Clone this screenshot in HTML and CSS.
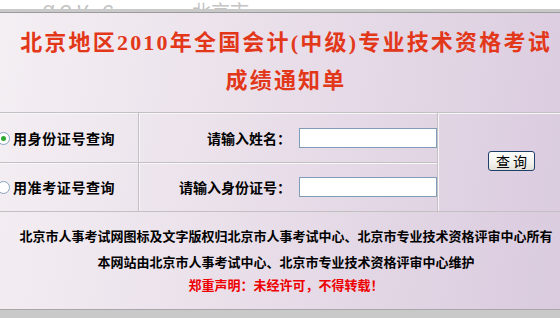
FILE: index.html
```html
<!DOCTYPE html>
<html lang="zh-CN">
<head>
<meta charset="utf-8">
<title>成绩通知单</title>
<link rel="stylesheet" href="styles.css">
</head>
<body>
<div class="page">
  <div class="topstrip">
    <span class="wm wm-latin">gov.c</span>
    <span class="wm wm-cjk">北京市</span>
  </div>
  <div class="topbar"></div>
  <div class="main">
    <div class="wrap">
      <h1 class="title">
        <span class="title-line">北京地区2010年全国会计(中级)专业技术资格考试</span>
        <span class="title-line">成绩通知单</span>
      </h1>
      <table class="query">
        <colgroup>
          <col class="c1">
          <col class="c2">
          <col class="c3">
        </colgroup>
        <tr class="r1">
          <td class="opt"><span class="radio checked"></span>用身份证号查询</td>
          <td class="field"><div class="fieldrow"><span class="lbl">请输入姓名：</span><span class="box"></span></div></td>
          <td class="btncell" rowspan="2"><span class="btn">查 询</span></td>
        </tr>
        <tr class="r2">
          <td class="opt"><span class="radio"></span>用准考证号查询</td>
          <td class="field"><div class="fieldrow"><span class="lbl">请输入身份证号：</span><span class="box"></span></div></td>
        </tr>
      </table>
      <div class="foot">
        <p class="fl l1">北京市人事考试网图标及文字版权归北京市人事考试中心、北京市专业技术资格评审中心所有</p>
        <p class="fl l2">本网站由北京市人事考试中心、北京市专业技术资格评审中心维护</p>
        <p class="fl l3">郑重声明：未经许可，不得转载！</p>
      </div>
    </div>
  </div>
  <div class="bottombar"></div>
</div>
</body>
</html>
```
FILE: styles.css
```css
html, body {
  margin: 0;
  padding: 0;
  overflow: hidden;
  background: #ffffff;
}
body {
  font-family: "Noto Sans CJK SC", sans-serif;
}
.page {
  width: 560px;
  height: 318px;
  overflow: hidden;
}
.topstrip {
  height: 9px;
  overflow: hidden;
  background: #ffffff;
  display: flex;
  align-items: flex-end;
}
.wm {
  color: #c4c4c4;
  white-space: nowrap;
  line-height: 20px;
  margin-bottom: -11px;
}
.wm-latin {
  font-family: "Liberation Sans", sans-serif;
  font-style: italic;
  font-size: 22px;
  letter-spacing: 5px;
  margin-left: 42px;
}
.wm-cjk {
  font-family: "Noto Sans CJK SC", sans-serif;
  font-size: 19px;
  margin-left: 74px;
  margin-bottom: -12px;
}
.topbar {
  height: 3px;
  background: #c9c9c9;
  border-bottom: 1px solid #9c9c9c;
}
.main {
  height: 297px;
  background: linear-gradient(100deg, #f4eff3 0%, #ece3ec 35%, #e2d6e4 70%, #dacbdf 100%);
  overflow: hidden;
}
.wrap {
  width: 604px;
  margin-left: -16px;
}
.title {
  margin: 0;
  padding-top: 11px;
  text-align: center;
  font-family: "Liberation Serif", "Noto Sans CJK SC", serif;
  font-weight: bold;
  font-size: 22px;
  line-height: 38px;
  letter-spacing: 2.2px;
  color: #e3371a;
}
.title-line {
  display: block;
  white-space: nowrap;
}
.query {
  margin-top: 12px;
  width: 604px;
  border-collapse: collapse;
  table-layout: fixed;
}
.c1 { width: 154px; }
.c2 { width: 299px; }
.c3 { width: 151px; }
.query td {
  border: 1px solid #c3c0c4;
  padding: 0;
  box-shadow: inset 1px 1px 0 #f8f6f8;
}
.r1 td { height: 49px; }
.r2 td { height: 48px; }
.opt {
  padding-left: 12px !important;
  font-weight: bold;
  font-size: 14px;
  letter-spacing: 0.6px;
  color: #000;
  white-space: nowrap;
}
.radio {
  display: inline-block;
  width: 11px;
  height: 11px;
  border: 1px solid #8aa3bd;
  border-radius: 50%;
  background: #ffffff;
  margin-right: 3px;
  vertical-align: -1px;
  position: relative;
  box-sizing: content-box;
}
.radio.checked::after {
  content: "";
  position: absolute;
  left: 3px;
  top: 3px;
  width: 5px;
  height: 5px;
  border-radius: 50%;
  background: #2fa62f;
}
.fieldrow {
  display: flex;
  justify-content: flex-end;
  align-items: center;
  gap: 8px;
}
.lbl {
  font-weight: bold;
  font-size: 14px;
  color: #000;
  white-space: nowrap;
}
.box {
  display: block;
  width: 138px;
  height: 20px;
  box-sizing: border-box;
  border: 1px solid #7f9db9;
  background: #ffffff;
}
.btncell {
  vertical-align: middle;
}
.btn {
  display: block;
  margin: -3px 0 0 50px;
  width: 47px;
  height: 20px;
  box-sizing: border-box;
  border: 1px solid #1f3f6a;
  border-radius: 3px;
  background: linear-gradient(#ffffff, #f3f2ed 60%, #e3e1d8);
  font-size: 14px;
  line-height: 18px;
  color: #000;
  white-space: pre;
  text-align: center;
}
.foot {
  height: 98px;
  border-bottom: 1px solid #a8a6a8;
  padding-top: 11px;
  box-sizing: border-box;
  text-align: center;
}
.fl {
  margin: 0;
  font-weight: bold;
  font-size: 13px;
  white-space: nowrap;
  color: #000;
}
.l1 { line-height: 26px; }
.l2 { line-height: 26px; }
.l3 { line-height: 20px; color: #ee0000; }
.bottombar {
  height: 8px;
  background: #c9c9c9;
}
```
